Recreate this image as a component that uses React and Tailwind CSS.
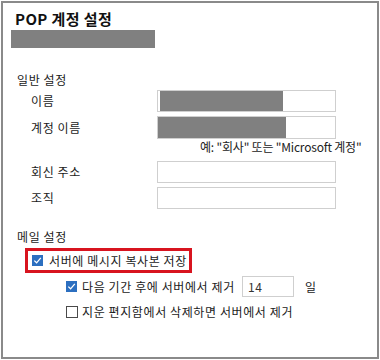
import React from "react";

function Checked() {
  return (
    <span className="flex h-[11px] w-[11px] shrink-0 items-center justify-center bg-[#2c6fc0]">
      <svg width="9" height="9" viewBox="0 0 9 9">
        <path d="M1.3 4.6 L3.6 6.8 L7.8 1.9" fill="none" stroke="#ffffff" strokeWidth="1.3" />
      </svg>
    </span>
  );
}

function Unchecked() {
  return <span className="block h-[12px] w-[12px] shrink-0 border border-[#4a4a4a] bg-white" />;
}

function Row({ label, children, className = "" }) {
  return (
    <div className={"flex h-[22px] items-center " + className}>
      <div className="ml-[28px] w-[126px] leading-[16px]">{label}</div>
      <div className="flex h-full w-[179px] items-center border border-[#cfcfcf] bg-white">{children}</div>
    </div>
  );
}

export default function App() {
  return (
    <div className="h-[360px] w-[380px] bg-white pl-[1px] pt-[1px]">
      <div className="flex h-[358px] w-[378px] flex-col border-2 border-[#8a8a8a] font-['Noto_Sans_CJK_KR','Noto_Sans',sans-serif] text-[12px] tracking-[0.6px] text-[#1b1b1b]">
        <div className="ml-[12px] mt-[6px] text-[15px] font-semibold leading-[20px] tracking-[0.4px] text-[#111]">POP 계정 설정</div>
        <div className="ml-[8px] mt-[1px] h-[18px] w-[144px] bg-[#808080]" />

        <div className="ml-[14px] mt-[24px] leading-[16px]">일반 설정</div>

        <Row label="이름" className="mt-[2px]">
          <div className="ml-[2px] h-[20px] w-[123px] bg-[#808080]" />
        </Row>
        <Row label="계정 이름" className="mt-[4px] !h-[23px]">
          <div className="h-[21px] w-[128px] bg-[#808080]" />
        </Row>
        <div className="ml-[197px] whitespace-nowrap leading-[16px] tracking-[-0.2px] text-[#222]">예: "회사" 또는 "Microsoft 계정"</div>
        <Row label="회신 주소" className="mt-[6px]" />
        <Row label="조직" className="mt-[4px]" />

        <div className="ml-[14px] mt-[20px] leading-[16px]">메일 설정</div>

        <div className="ml-[22px] mt-[3px] flex h-[25px] w-[167px] items-center gap-[6px] border-[3px] border-[#d8141f] pl-[4px]">
          <Checked />
          <span className="whitespace-nowrap leading-[16px]">서버에 메시지 복사본 저장</span>
        </div>

        <div className="ml-[63px] mt-[3px] flex h-[21px] items-center">
          <Checked />
          <span className="ml-[5px] w-[150px] whitespace-nowrap leading-[16px]">다음 기간 후에 서버에서 제거</span>
          <div className="ml-[10px] flex h-[21px] w-[52px] items-center border border-[#cfcfcf] pl-[5px] text-[#333]">14</div>
          <span className="ml-[11px] leading-[16px]">일</span>
        </div>

        <div className="ml-[63px] mt-[7px] flex h-[16px] items-center">
          <Unchecked />
          <span className="ml-[4px] whitespace-nowrap leading-[16px]">지운 편지함에서 삭제하면 서버에서 제거</span>
        </div>
      </div>
    </div>
  );
}
